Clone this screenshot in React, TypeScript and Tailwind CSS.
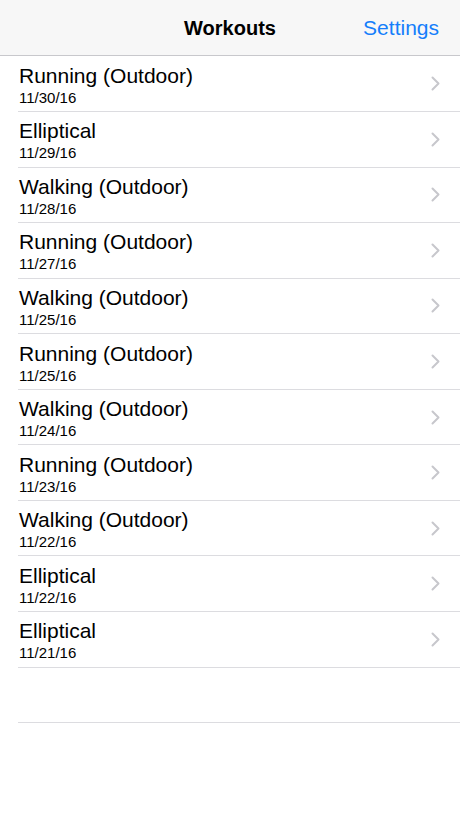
const workouts = [
  { name: "Running (Outdoor)", date: "11/30/16" },
  { name: "Elliptical", date: "11/29/16" },
  { name: "Walking (Outdoor)", date: "11/28/16" },
  { name: "Running (Outdoor)", date: "11/27/16" },
  { name: "Walking (Outdoor)", date: "11/25/16" },
  { name: "Running (Outdoor)", date: "11/25/16" },
  { name: "Walking (Outdoor)", date: "11/24/16" },
  { name: "Running (Outdoor)", date: "11/23/16" },
  { name: "Walking (Outdoor)", date: "11/22/16" },
  { name: "Elliptical", date: "11/22/16" },
  { name: "Elliptical", date: "11/21/16" },
];

function Chevron() {
  return (
    <svg width="9" height="15" viewBox="0 0 9 15" fill="none" className="shrink-0">
      <path d="M1.5 1.5 L7.5 7.5 L1.5 13.5" stroke="#c7c7cc" strokeWidth="2" strokeLinecap="round" strokeLinejoin="round" />
    </svg>
  );
}

export default function App() {
  return (
    <div className="w-[460px] h-[818px] bg-white font-['Liberation_Sans',Arial,sans-serif] text-black overflow-hidden">
      {/* Nav bar */}
      <div className="h-[56px] bg-[#f7f7f7] border-b border-[#c8c8cc] flex items-center relative">
        <div className="flex-1 text-center text-[20px] font-semibold">Workouts</div>
        <div className="absolute right-[21px] top-[12px] text-[21px] text-[#157efb]">Settings</div>
      </div>

      {/* List */}
      <div className="pl-[18px] pt-[0.5px]">
        {workouts.map((w, i) => (
          <div key={i} className="h-[55.55px] border-b border-[#dcdce0] flex items-center pr-[20px]">
            <div className="flex-1 pl-[1px] pt-[3px]">
              <div className="text-[21px] leading-[24px]">{w.name}</div>
              <div className="text-[15px] leading-[19px]">{w.date}</div>
            </div>
            <Chevron />
          </div>
        ))}
        <div className="h-[55.55px] border-b border-[#dcdce0]" />
      </div>
    </div>
  );
}
